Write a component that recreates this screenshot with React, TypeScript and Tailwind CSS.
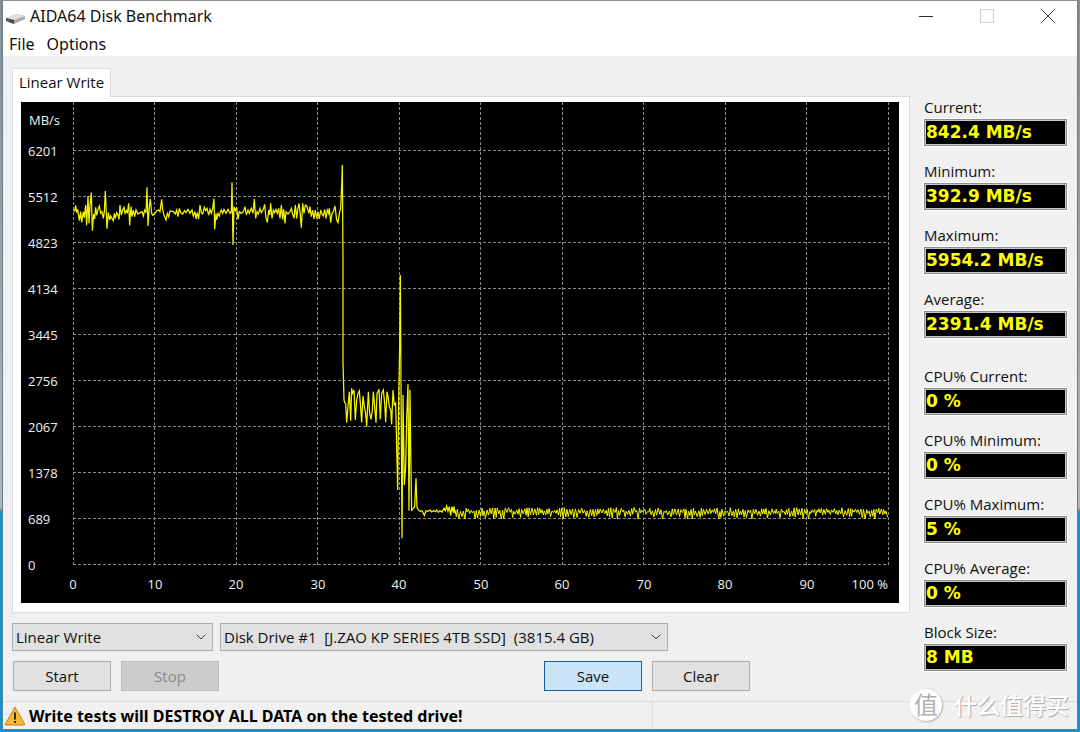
import { ChevronDown } from "lucide-react";
import clsx from "clsx";

const speedStats = [
  { id: "speed-current", label: "Current:", value: "842.4 MB/s" },
  { id: "speed-min", label: "Minimum:", value: "392.9 MB/s" },
  { id: "speed-max", label: "Maximum:", value: "5954.2 MB/s" },
  { id: "speed-avg", label: "Average:", value: "2391.4 MB/s" },
];

const cpuStats = [
  { id: "cpu-current", label: "CPU% Current:", value: "0 %" },
  { id: "cpu-min", label: "CPU% Minimum:", value: "0 %" },
  { id: "cpu-max", label: "CPU% Maximum:", value: "5 %" },
  { id: "cpu-avg", label: "CPU% Average:", value: "0 %" },
  { id: "block-size", label: "Block Size:", value: "8 MB" },
];

const speedTicks = [6201, 5512, 4823, 4134, 3445, 2756, 2067, 1378, 689, 0];
const percentTicks = [0, 10, 20, 30, 40, 50, 60, 70, 80, 90, 100];

// Recorded samples, in thirds of a chart unit from each run's own origin
const runs = [
  {
    x: 39,
    y: 48,
    samples:
      "40,180 44,183 47,166 50,188 53,178 58,212 62,185 65,217 70,185 73,203 77,165 80,226 84,138 87,220 90,165 94,128 97,242 101,192 104,207 107,172 110,196 114,178 118,168 122,190 126,185 130,205 133,185 136,123 141,236 145,188 149,210 152,198 156,205 160,212 163,190 166,205 170,188 174,195 177,208 180,165 184,195 188,180 192,172 195,190 199,182 202,190 206,160 209,226 213,170 216,200 220,180 224,200 228,180 234,192 240,188 246,185 250,198 254,180 258,188 261,112 264,228 268,170 271,147 275,190 278,196 285,190 290,182 296,180 300,185 305,148 308,180 312,195 318,210 322,190 326,200 330,183 340,185 346,192 350,180 354,200 358,175 362,188 368,192 374,182 378,188 384,178 390,190 396,180 400,198 405,185 408,207 412,188 416,207 420,165 424,188 428,192 433,172 437,182 441,175 446,195 450,178 454,190 458,175 462,146 464,238 468,190 470,210 474,190 478,198 480,190",
  },
  {
    x: 199,
    y: 48,
    samples:
      "0,190 4,180 8,190 12,178 18,190 24,178 30,190 34,185 36,97 39,285 42,170 46,182 50,172 54,208 58,185 64,190 70,185 75,170 79,195 84,180 88,190 94,175 99,190 103,147 107,205 111,185 115,192 120,175 124,188 130,178 134,163 138,205 142,217 146,180 149,195 152,160 156,205 160,180 164,188 168,178 172,190 176,175 180,205 184,165 188,208 191,178 195,220 198,185 204,192 210,185 214,175 218,192 222,205 226,165 230,205 233,180 237,160 240,185 244,233 248,160 252,190 256,165 260,168 264,180 267,190 270,170 274,200 278,180 282,207 286,180 290,205 294,185 298,207 302,180 306,192 310,198 314,178 318,205 322,180 326,190 328,175 332,218 336,190 340,185 345,168 350,210 354,218 358,190 362,175 365,105 367,45 369,330",
  },
  {
    x: 299,
    y: 158,
    samples:
      "69,0 69,305 72,420 74,428 77,430 80,488 84,440 88,395 92,482 95,385 98,400 102,390 106,480 110,420 114,400 118,392 121,430 125,487 129,408 133,440 137,460 140,500 145,395 149,460 153,478 157,450 160,395 164,440 168,488 171,400 174,395 177,388 181,478 185,400 190,390 194,430 197,487 201,395 204,410 208,440 212,450 215,493 219,390 223,435 227,430 230,560 233,690 236,423 239,255 241,45 243,372 246,835 249,405 253,675 257,620 260,475 264,373 267,752 270,390 272,562 275,750 280,745 284,740 288,655 291,742 295,750",
  },
  {
    x: 379,
    y: 378,
    samples:
      "55,90 60,94 66,92 73,106 78,92 84,94 90,90 95,96 100,92 106,95 110,90 115,97 120,92 126,96 132,85 136,92 140,78 144,94 148,80 152,106 156,80 160,98 162,79 165,100",
  },
];

// Steady state once the cache is exhausted: a narrow band around 800 MB/s
const steadySamples = () => {
  let seed = 41;
  const next = () => {
    seed = (seed * 48271) % 2147483647;
    return seed / 2147483647;
  };
  const points: string[] = [];
  let x = 434;
  let high = true;
  while (x < 868) {
    const low = next() > 0.9 ? 417 : 410 + next() * 6;
    points.push(`${x.toFixed(1)},${(high ? 405.5 + next() * 4 : low).toFixed(1)}`);
    high = !high;
    x += 0.9 + next() * 0.8;
  }
  return points.join(" ");
};

const SpeedChart = () => (
  <svg viewBox="0 0 878 501" className="block h-auto w-full bg-black" role="img" aria-label="Linear Write">
    <g stroke="#8a8a8a" strokeDasharray="3 2" shapeRendering="crispEdges">
      {speedTicks.map((tick, i) => (
        <line key={tick} x1="52" x2="868" y1={48.5 + i * 46} y2={48.5 + i * 46} />
      ))}
      {percentTicks.map((tick, i) => (
        <line key={tick} x1={52.5 + Math.floor(i * 81.5)} x2={52.5 + Math.floor(i * 81.5)} y1="0" y2="463" />
      ))}
    </g>
    <g fill="none" stroke="#f4f400" strokeWidth="1.25">
      {runs.map((run) => (
        <g key={run.x} transform={`translate(${run.x} ${run.y}) scale(0.33333)`}>
          <polyline points={run.samples} vectorEffect="non-scaling-stroke" />
        </g>
      ))}
      <polyline points={steadySamples()} strokeWidth="1" />
    </g>
    <g fill="#f0f0f0" className="font-['Open_Sans',sans-serif] text-[13px]">
      <text x="8" y="23">MB/s</text>
      {speedTicks.map((tick, i) => (
        <text key={tick} x="7" y={54 + i * 46}>{tick}</text>
      ))}
      {percentTicks.slice(0, -1).map((tick, i) => (
        <text key={tick} x={52 + Math.round(i * 81.5)} y="487" textAnchor="middle">{tick}</text>
      ))}
      <text x="867" y="487" textAnchor="end">100 %</text>
    </g>
  </svg>
);

const Stat = ({ id, label, value }: { id: string; label: string; value: string }) => (
  <div className="flex flex-col">
    <label htmlFor={id} className="h-6 text-[15px] leading-6">{label}</label>
    <output
      id={id}
      className="block h-[27px] border border-[#8c8c8c] bg-black pl-px font-['DejaVu_Sans',sans-serif] text-[17px] leading-6 font-bold text-[#ffff00] outline outline-white ring-1 ring-[#c8c8c8] ring-inset"
    >
      {value}
    </output>
  </div>
);

const Picker = ({ label, option, className }: { label: string; option: string; className: string }) => (
  <div className={clsx("relative h-7", className)}>
    <select
      aria-label={label}
      className="h-full w-full appearance-none border border-[#adadad] bg-[#e1e1e1] pr-7 pl-[3px] text-[15px] leading-5"
    >
      <option>{option}</option>
    </select>
    <ChevronDown className="pointer-events-none absolute top-1.5 right-1 h-4 w-4 text-[#404040]" strokeWidth={1.5} />
  </div>
);

const buttonClass = "h-[30px] w-[98px] border text-[15px] leading-5";

const App = () => (
  <div className="min-h-screen bg-[linear-gradient(180deg,#8c8c8c_0,#b4b4b4_507px,#808080_511px,#0a94d4_512px)] px-0.5 pt-px pb-0.5 font-['Open_Sans','Noto_Sans_CJK_SC',sans-serif] text-[#101010]">
    <div className="relative flex min-h-[calc(100vh-3px)] flex-col border-x border-b border-[#5f7f92] bg-[#f0f0f0]">
      <header className="bg-white">
        <div className="flex h-[30px] items-center pl-[3px]">
          <svg viewBox="0 0 20 12" className="mt-1.5 h-3 w-5">
            <path d="M0 5 11 1 19 3 19 6 8 11 0 8Z" fill="#a8a8a8" />
            <path d="M0 5 11 1 19 3 8 7Z" fill="#dedede" />
            <path d="M0 5 8 7 8 11 0 8Z" fill="#4a4a4a" />
            <path d="M1 7 3 7.5" stroke="#3fae3f" />
          </svg>
          <h1 className="ml-1 flex-1 font-['Noto_Sans',sans-serif] text-base leading-6">AIDA64 Disk Benchmark</h1>
          <div className="flex items-center gap-[47px] pr-[22px]">
            <button type="button" aria-label="Minimize">
              <svg viewBox="0 0 14 14" className="h-3.5 w-3.5">
                <path d="M0 7.5H14" stroke="#303030" />
              </svg>
            </button>
            <button type="button" aria-label="Maximize" disabled>
              <svg viewBox="0 0 14 14" className="h-3.5 w-3.5">
                <rect x="0.5" y="0.5" width="13" height="13" fill="none" stroke="#d0d0d0" />
              </svg>
            </button>
            <button type="button" aria-label="Close">
              <svg viewBox="0 0 14 14" className="h-3.5 w-3.5">
                <path d="M0.5 0.5 13.5 13.5M13.5 0.5 0.5 13.5" stroke="#303030" />
              </svg>
            </button>
          </div>
        </div>
        <nav className="flex h-[25px] gap-3 pl-1.5 font-['Noto_Sans',sans-serif] text-base leading-6">
          <button type="button">File</button>
          <button type="button">Options</button>
        </nav>
      </header>

      <main className="flex flex-1 gap-3.5 pt-3 pr-2.5 pl-[9px]">
        <div className="flex min-w-0 flex-1 flex-col">
          <button
            type="button"
            className="relative z-10 -mb-px h-[29px] self-start border border-b-0 border-[#dcdcdc] bg-white px-1.5 pb-0.5 text-[15px] leading-6"
          >
            Linear Write
          </button>
          <div className="border border-[#dcdcdc] bg-white pt-[5px] pr-2.5 pb-[9px] pl-2">
            <SpeedChart />
          </div>
          <div className="mt-2.5 flex gap-[7px]">
            <Picker label="Test" option="Linear Write" className="w-[201px]" />
            <Picker
              label="Drive"
              option={"Disk Drive #1\u00a0 [J.ZAO KP SERIES 4TB SSD]\u00a0 (3815.4 GB)"}
              className="w-[448px]"
            />
          </div>
          <div className="mt-2.5 flex w-[738px] gap-2.5 pl-px">
            <button type="button" className={clsx(buttonClass, "border-[#adadad] bg-[#e1e1e1]")}>Start</button>
            <button type="button" disabled className={clsx(buttonClass, "border-[#bfbfbf] bg-[#cccccc] text-[#8a8a8a]")}>
              Stop
            </button>
            <button type="button" className={clsx(buttonClass, "ml-auto border-[#0f5fa6] bg-[#cce4f7]")}>Save</button>
            <button type="button" className={clsx(buttonClass, "border-[#adadad] bg-[#e1e1e1]")}>Clear</button>
          </div>
        </div>

        <aside className="flex w-[143px] shrink-0 flex-col gap-[26px] pt-[27px]">
          <div className="flex flex-col gap-[13px]">
            {speedStats.map((stat) => (
              <Stat key={stat.id} {...stat} />
            ))}
          </div>
          <div className="flex flex-col gap-[13px]">
            {cpuStats.map((stat) => (
              <Stat key={stat.id} {...stat} />
            ))}
          </div>
        </aside>
      </main>

      <footer className="flex h-7 items-stretch border-t border-[#dcdcdc]">
        <div className="flex w-[650px] items-center gap-[3px] border-r border-[#dcdcdc] pl-px">
          <svg viewBox="0 0 22 20" className="h-5 w-[22px]">
            <path
              d="M11 1.2 20.6 18Q21 19 20 19H2Q1 19 1.4 18Z"
              fill="#fdb92e"
              stroke="#b97a18"
              strokeLinejoin="round"
            />
            <path d="M11 6.5V13.5M11 15V17" stroke="#1c1c1c" strokeWidth="1.8" />
          </svg>
          <p className="font-['Noto_Sans',sans-serif] text-base leading-6 font-bold text-black">
            Write tests will DESTROY ALL DATA on the tested drive!
          </p>
        </div>
      </footer>

      <div className="pointer-events-none absolute right-2 bottom-2 flex items-center gap-3 text-white">
        <span className="flex h-8 w-8 items-center justify-center rounded-full bg-white text-2xl leading-8 text-[#b0b0b0] shadow-[1px_1px_2px_#b0b0b0]">
          值
        </span>
        <span className="text-[23px] leading-8 font-medium [text-shadow:1px_1px_1px_#a8a8a8]">什么值得买</span>
      </div>
    </div>
  </div>
);

export default App;
